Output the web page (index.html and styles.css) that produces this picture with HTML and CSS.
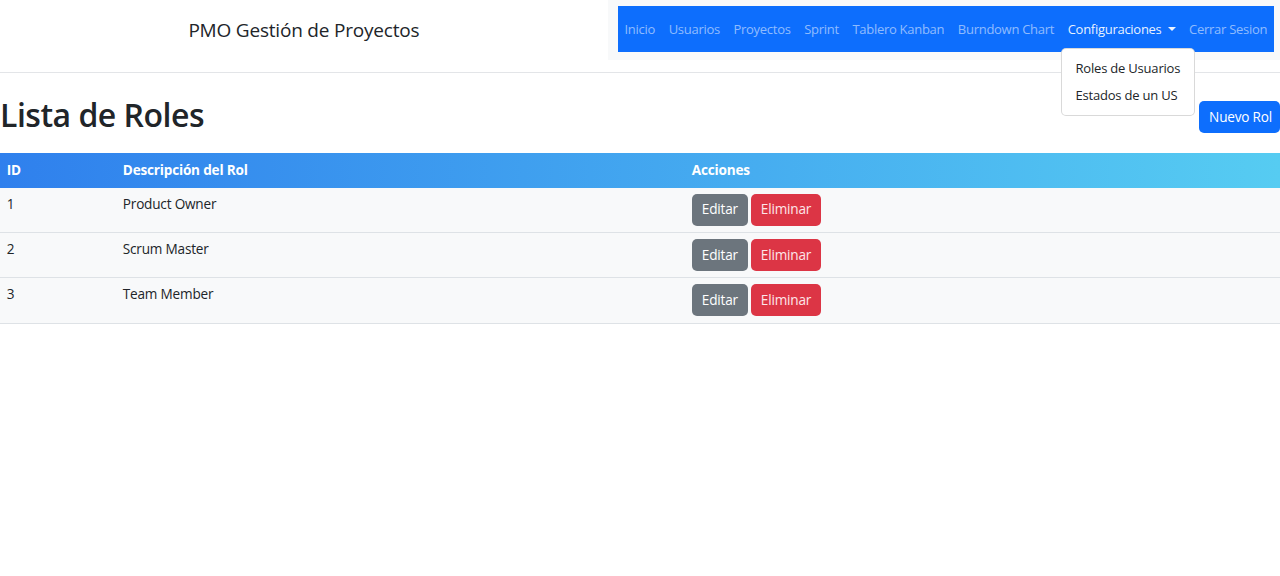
FILE: index.html
```html
<!DOCTYPE html>
<html lang="es">
<head>
<meta charset="utf-8">
<title>Lista de Roles</title>
<link rel="stylesheet" href="styles.css">
</head>
<body>
<header class="topbar">
  <div class="brand">PMO Gestión de Proyectos</div>
  <div class="nav-wrap">
    <nav class="navbar">
      <ul class="nav">
        <li><a class="nav-link" href="#">Inicio</a></li>
        <li><a class="nav-link" href="#">Usuarios</a></li>
        <li><a class="nav-link" href="#">Proyectos</a></li>
        <li><a class="nav-link" href="#">Sprint</a></li>
        <li><a class="nav-link" href="#">Tablero Kanban</a></li>
        <li><a class="nav-link" href="#">Burndown Chart</a></li>
        <li class="dropdown">
          <a class="nav-link active" href="#">Configuraciones<span class="caret"></span></a>
          <ul class="dropdown-menu">
            <li><a class="dropdown-item" href="#">Roles de Usuarios</a></li>
            <li><a class="dropdown-item" href="#">Estados de un US</a></li>
          </ul>
        </li>
        <li><a class="nav-link" href="#">Cerrar Sesion</a></li>
      </ul>
    </nav>
  </div>
</header>

<main class="content">
  <div class="title-row">
    <h1 class="title">Lista de Roles</h1>
    <button class="btn btn-primary btn-new">Nuevo Rol</button>
  </div>

  <table class="roles">
    <thead>
      <tr>
        <th class="col-id">ID</th>
        <th class="col-desc">Descripción del Rol</th>
        <th>Acciones</th>
      </tr>
    </thead>
    <tbody>
      <tr>
        <td>1</td>
        <td>Product Owner</td>
        <td><div class="actions"><button class="btn btn-secondary">Editar</button><button class="btn btn-danger">Eliminar</button></div></td>
      </tr>
      <tr>
        <td>2</td>
        <td>Scrum Master</td>
        <td><div class="actions"><button class="btn btn-secondary">Editar</button><button class="btn btn-danger">Eliminar</button></div></td>
      </tr>
      <tr>
        <td>3</td>
        <td>Team Member</td>
        <td><div class="actions"><button class="btn btn-secondary">Editar</button><button class="btn btn-danger">Eliminar</button></div></td>
      </tr>
    </tbody>
  </table>
</main>
</body>
</html>
```

FILE: styles.css
```css
* { box-sizing: border-box; }

body {
  margin: 0;
  font-family: "Segoe UI", "Open Sans", "Noto Sans", sans-serif;
  font-size: 13.6px;
  line-height: 1.5;
  letter-spacing: -0.2px;
  color: #212529;
  background: #fff;
}

/* ---------- header ---------- */
.topbar {
  display: flex;
  align-items: flex-start;
  height: 73px;
  border-bottom: 1px solid #e3e5e8;
}

.brand {
  flex: 1;
  text-align: center;
  font-size: 19px;
  line-height: 28px;
  padding-top: 16px;
  color: #212529;
}

.nav-wrap {
  background: #f8f9fa;
  padding: 6px 6px 8px 10px;
}

.navbar {
  background: #0d6efd;
  height: 46px;
  display: flex;
  align-items: center;
}

.nav {
  list-style: none;
  margin: 0;
  padding: 0;
  display: flex;
}

.nav-link {
  display: block;
  padding: 7px 6.8px 5px;
  font-size: 13px;
  letter-spacing: -0.28px;
  color: rgba(255, 255, 255, 0.55);
  text-decoration: none;
  white-space: nowrap;
}

.nav-link.active {
  color: rgba(255, 255, 255, 0.92);
}

.caret {
  display: inline-block;
  margin-left: 6px;
  vertical-align: 3px;
  border-top: 4px solid currentColor;
  border-left: 4px solid transparent;
  border-right: 4px solid transparent;
}

.dropdown {
  position: relative;
}

.dropdown-menu {
  position: absolute;
  top: 35px;
  left: 0;
  z-index: 10;
  list-style: none;
  margin: 0;
  padding: 6.8px 0;
  min-width: 133px;
  background: #fff;
  border: 1px solid rgba(0, 0, 0, 0.15);
  border-radius: 5px;
}

.dropdown-item {
  display: block;
  padding: 3.4px 13.6px;
  font-size: 13px;
  color: #212529;
  text-decoration: none;
  white-space: nowrap;
}

/* ---------- content ---------- */
.title-row {
  display: flex;
  justify-content: space-between;
  align-items: flex-start;
  margin-top: 22px;
}

.title {
  margin: 0 0 18px;
  font-size: 32px;
  line-height: 40px;
  font-weight: 600;
  letter-spacing: -0.5px;
}

.btn {
  display: inline-block;
  font-family: inherit;
  font-size: 13.6px;
  line-height: 20.4px;
  letter-spacing: -0.2px;
  padding: 4.8px 9px;
  border: 1px solid transparent;
  border-radius: 5px;
  color: #fff;
  cursor: pointer;
}

.btn-new {
  margin-top: 6px;
  padding: 4.8px 7px 4.8px 9px;
}

.btn-primary { background: #0d6efd; }
.btn-secondary { background: #6c757d; }
.btn-danger { background: #dc3545; color: #fde6e9; }

.roles {
  width: 100%;
  border-collapse: collapse;
}

.roles thead tr {
  background: linear-gradient(to right, #2f80ed, #56ccf2);
}

.roles th {
  text-align: left;
  color: #fff;
  font-weight: 700;
  padding: 7.3px 6.8px 6.8px;
  line-height: 20.4px;
}

.col-id { width: 116px; }
.col-desc { width: 569px; }

.roles td {
  background: #f8f9fa;
  padding: 6.2px 6.8px;
  vertical-align: top;
  border-bottom: 1px solid #dee2e6;
  line-height: 20.4px;
}

.actions {
  display: flex;
  gap: 3px;
}
```
